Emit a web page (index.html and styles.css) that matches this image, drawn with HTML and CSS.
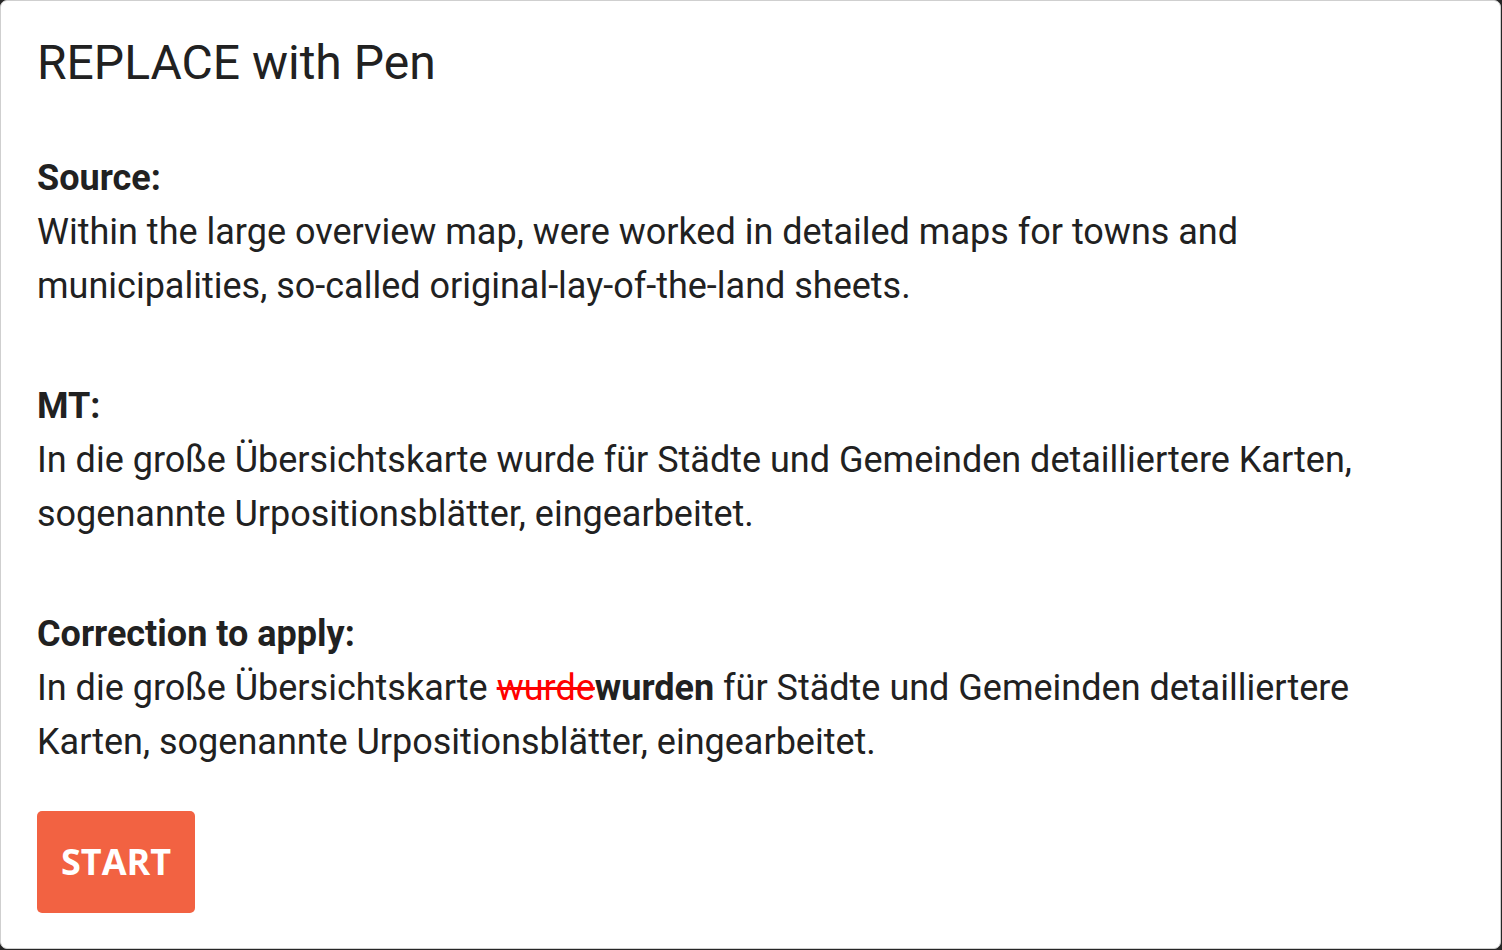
FILE: index.html
```html
<!DOCTYPE html>
<html lang="en">
<head>
<meta charset="utf-8">
<title>REPLACE with Pen</title>
<link rel="stylesheet" href="styles.css">
</head>
<body>
<div class="dialog">
  <h1 class="title">REPLACE with Pen</h1>
  <div class="sections">
    <section class="section">
      <div class="label">Source:</div>
      <div class="text">Within the large overview map, were worked in detailed maps for towns and municipalities, so-called original-lay-of-the-land sheets.</div>
    </section>
    <section class="section">
      <div class="label">MT:</div>
      <div class="text">In die große Übersichtskarte wurde für Städte und Gemeinden detailliertere Karten, sogenannte Urpositionsblätter, eingearbeitet.</div>
    </section>
    <section class="section">
      <div class="label">Correction to apply:</div>
      <div class="text">In die große Übersichtskarte <del class="del">wurde</del><strong class="ins">wurden</strong> für Städte und Gemeinden detailliertere Karten, sogenannte Urpositionsblätter, eingearbeitet.</div>
    </section>
  </div>
  <button class="start" type="button">START</button>
</div>
</body>
</html>
```

FILE: styles.css
```css
html, body {
  margin: 0;
  padding: 0;
}
body {
  background: #262626;
  width: 1502px;
  height: 950px;
  overflow: hidden;
}
.dialog {
  box-sizing: border-box;
  width: 1501px;
  height: 949px;
  background: #ffffff;
  border: 1px solid #cfcfcf;
  border-radius: 7px;
  padding: 34px 37px 0 36px;
  font-family: Roboto, "Liberation Sans", sans-serif;
  color: #212121;
}
.title {
  margin: 0;
  font-size: 48px;
  line-height: 56px;
  font-weight: 400;
}
.sections {
  margin-top: 60px;
  display: flex;
  flex-direction: column;
  gap: 66px;
}
.section {
  font-size: 36px;
  line-height: 54px;
}
.label {
  font-weight: 700;
}
.text {
  font-weight: 400;
}
.del {
  color: #ff0000;
  text-decoration: line-through;
  text-decoration-color: #ff0000;
}
.ins {
  font-weight: 700;
}
.start {
  margin-top: 42px;
  display: block;
  height: 102px;
  padding: 0 24px;
  border: 0;
  border-radius: 5px;
  background: #f26242;
  color: #ffffff;
  font-family: "Open Sans", "Liberation Sans", sans-serif;
  font-weight: 700;
  font-size: 36px;
  line-height: 48px;
  cursor: pointer;
}
```
